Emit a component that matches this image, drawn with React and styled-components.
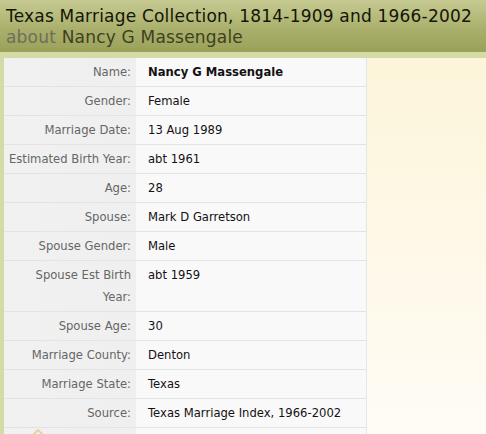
import React from 'react';
import styled, { createGlobalStyle } from 'styled-components';

const rows = [
    { label: 'Name:', value: 'Nancy G Massengale', strong: true },
    { label: 'Gender:', value: 'Female' },
    { label: 'Marriage Date:', value: '13 Aug 1989' },
    { label: 'Estimated Birth Year:', value: 'abt 1961' },
    { label: 'Age:', value: '28' },
    { label: 'Spouse:', value: 'Mark D Garretson' },
    { label: 'Spouse Gender:', value: 'Male' },
    { label: ['Spouse Est Birth', 'Year:'], value: 'abt 1959' },
    { label: 'Spouse Age:', value: '30' },
    { label: 'Marriage County:', value: 'Denton' },
    { label: 'Marriage State:', value: 'Texas' },
    { label: 'Source:', value: 'Texas Marriage Index, 1966-2002' },
]

export default function App() {
    return (
        <>
            <GlobalStyle />
            <Page>
                <Header>
                    <Title>Texas Marriage Collection, 1814-1909 and 1966-2002</Title>
                    <Subtitle><About>about</About> Nancy G Massengale</Subtitle>
                </Header>
                <Content>
                    <Panel>
                        <Table>
                            {rows.map((r, i) => (
                                <Row key={i}>
                                    <Label>
                                        {Array.isArray(r.label)
                                            ? r.label.map((l, j) => <span key={j}>{l}{j < r.label.length - 1 && <br />}</span>)
                                            : r.label}
                                    </Label>
                                    <Value strong={r.strong}>{r.value}</Value>
                                </Row>
                            ))}
                            <Row>
                                <Label>
                                    <Caret>
                                        <svg width="14" height="9" viewBox="0 0 14 9">
                                            <path d="M1 8 L7 2 L13 8" fill="none" stroke="#e8c98a" strokeWidth="1.5" />
                                        </svg>
                                    </Caret>
                                    &nbsp;
                                </Label>
                                <Value>&nbsp;</Value>
                            </Row>
                        </Table>
                    </Panel>
                </Content>
            </Page>
        </>
    )
}

//CSS//
const GlobalStyle = createGlobalStyle`
html, body {
    margin: 0;
    padding: 0;
    background: #d4dba6;
}
body {
    font-family: "DejaVu Sans", Verdana, sans-serif;
}
`

const Page = styled.div`
width: 486px;
height: 434px;
overflow: hidden;
display: flex;
flex-direction: column;
`

const Header = styled.div`
height: 52px;
flex-shrink: 0;
box-sizing: border-box;
padding: 6px 0 0 6px;
background: linear-gradient(to bottom, #c6ca92 0%, #aab06c 55%, #99a159 100%);
white-space: nowrap;
`

const Title = styled.div`
font-family: "DejaVu Sans", sans-serif;
font-size: 17px;
letter-spacing: 0.2px;
line-height: 21px;
color: #151508;
`

const Subtitle = styled.div`
font-family: "DejaVu Sans", sans-serif;
font-size: 17px;
letter-spacing: 0.2px;
line-height: 21px;
color: #3f3f22;
`

const About = styled.span`
color: #6e6e5c;
`

const Content = styled.div`
flex: 1;
min-height: 0;
padding: 6px 0 0 4px;
background: #d4dba6;
display: flex;
align-items: flex-start;
`

const Panel = styled.div`
flex: 1;
align-self: stretch;
overflow: hidden;
background: linear-gradient(to bottom, #fdf5da 0%, #fef9ea 60%, #fffcf6 100%);
`

const Table = styled.div`
width: 363px;
border-right: 1px solid #e6e6e6;
box-sizing: border-box;
font-size: 11.6px;
line-height: 22px;
`

const Row = styled.div`
display: flex;
border-bottom: 1px solid #e3e3e3;
`

const Label = styled.div`
position: relative;
width: 132px;
flex-shrink: 0;
box-sizing: border-box;
padding: 3px 5px 3px 2px;
text-align: right;
white-space: nowrap;
color: #666;
background: linear-gradient(to right, #f1f1f1, #efefef);
`

const Value = styled.div`
flex: 1;
padding: 3px 0 3px 12px;
color: #141014;
font-weight: ${props => props.strong ? 'bold' : 'normal'};
background: #f9f9f9;
`

const Caret = styled.span`
position: absolute;
left: 27px;
top: 0;
line-height: 0;
`
